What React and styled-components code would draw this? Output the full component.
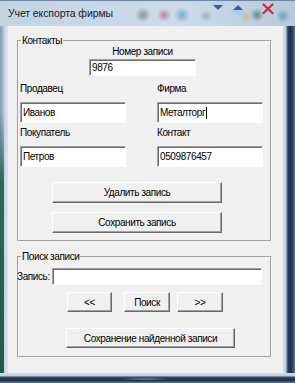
import React from "react";
import styled, { createGlobalStyle } from "styled-components";

const GlobalStyle = createGlobalStyle`
  html, body {
    margin: 0;
    padding: 0;
  }
  body {
    width: 295px;
    height: 383px;
    overflow: hidden;
    background: #2c4a66;
  }
`;

const Window = styled.div`
  width: 295px;
  height: 383px;
  display: flex;
  flex-direction: column;
  font-family: "Liberation Sans", Arial, sans-serif;
  font-size: 10px;
  letter-spacing: -0.4px;
  color: #000;
`;

const TitleBar = styled.div`
  height: 26px;
  flex: none;
  box-sizing: border-box;
  display: flex;
  align-items: flex-start;
  padding: 0 10px 0 8px;
  border-top: 1px solid #6a86a2;
  background:
    radial-gradient(circle at 143px 14px, rgba(70, 95, 90, 0.55) 0, rgba(70, 95, 90, 0) 8px),
    radial-gradient(circle at 164px 14px, rgba(175, 60, 110, 0.55) 0, rgba(175, 60, 110, 0) 7px),
    radial-gradient(circle at 182px 14px, rgba(40, 130, 190, 0.55) 0, rgba(40, 130, 190, 0) 8px),
    radial-gradient(circle at 206px 15px, rgba(90, 110, 130, 0.4) 0, rgba(90, 110, 130, 0) 6px),
    radial-gradient(circle at 246px 16px, rgba(200, 170, 90, 0.45) 0, rgba(200, 170, 90, 0) 7px),
    radial-gradient(circle at 257px 14px, rgba(40, 90, 70, 0.6) 0, rgba(40, 90, 70, 0) 7px),
    radial-gradient(circle at 283px 15px, rgba(40, 140, 150, 0.6) 0, rgba(40, 140, 150, 0) 7px),
    linear-gradient(to right, #c2d3e4 0, #cddbea 60%, #b7c9dc 100%);
`;

const Title = styled.span`
  font-size: 10.5px;
  letter-spacing: -0.1px;
  line-height: 12px;
  margin-top: 6px;
  color: #1a1a1a;
`;

const TitleButtons = styled.svg`
  margin-left: auto;
  flex: none;
`;

const Middle = styled.div`
  flex: 1;
  display: flex;
`;

const LeftEdge = styled.div`
  width: 8px;
  flex: none;
  background:
    linear-gradient(to bottom, rgba(30, 80, 60, 0) 0, rgba(30, 80, 60, 0) 25%, rgba(25, 95, 65, 0.85) 45%, rgba(20, 80, 55, 0.9) 100%) 0 0 / 4px 100% no-repeat,
    linear-gradient(to right, #7d97b0 0, #a6bbcf 3px, #c9d7e6 5px, #d8e3ee 8px);
`;

const RightEdge = styled.div`
  width: 12px;
  flex: none;
  background: linear-gradient(to right, #d3dde7 0, #c3cfdc 3px, #4f6b88 4px, #1c324c 6px, #20395a 9px, #61798f 12px);
`;

const BottomEdge = styled.div`
  height: 10px;
  flex: none;
  background:
    radial-gradient(ellipse at 145px 6px, rgba(150, 185, 220, 0.8) 0, rgba(150, 185, 220, 0) 25px),
    linear-gradient(to bottom, #d4dee8 0, #c0ccd9 3px, #30496a 4px, #1b2f4b 7px, #2a4260 8px, #6a7e94 10px);
`;

const Client = styled.div`
  width: 275px;
  flex: none;
  box-sizing: border-box;
  background: #f0f0f0;
  padding: 0 11px 0 9px;
  display: flex;
  flex-direction: column;
`;

const Group = styled.fieldset`
  margin: 9px 0 0 0;
  padding: 0 0 ${(p) => p.$bottom}px 1px;
  border: 2px groove #f4f4f4;
  display: flex;
  flex-direction: column;
  align-items: flex-start;
  min-width: 0;
`;

const Legend = styled.legend`
  line-height: 12px;
  padding: 0 1px;
  margin-left: 1px;
`;

const NumberBlock = styled.div`
  display: flex;
  flex-direction: column;
  align-items: center;
  margin: -2px 0 0 69px;
  width: 107px;
`;

const Label = styled.div`
  line-height: ${(p) => p.$lh || 14}px;
  white-space: nowrap;
`;

const TextBox = styled.div`
  box-sizing: border-box;
  width: ${(p) => p.$w}px;
  height: ${(p) => p.$h}px;
  margin-top: ${(p) => p.$mt || 0}px;
  background: #fff;
  border-top: 1px solid #a0a0a0;
  border-left: 1px solid #a0a0a0;
  border-right: 1px solid #fcfcfc;
  border-bottom: 1px solid #fcfcfc;
  box-shadow: inset 1px 1px 0 #6d6d6d;
  padding: 0 1px 0 2px;
  display: flex;
  align-items: center;
  line-height: 13px;
  white-space: nowrap;
`;

const Caret = styled.span`
  display: inline-block;
  width: 1px;
  height: 12px;
  background: #000;
  margin-left: 1px;
`;

const FieldGrid = styled.div`
  display: grid;
  grid-template-columns: 106px 106px;
  column-gap: 31px;
  row-gap: 3px;
  margin-top: 6px;
`;

const Field = styled.div`
  display: flex;
  flex-direction: column;
  gap: 6px;
`;

const Button = styled.div`
  box-sizing: border-box;
  width: ${(p) => p.$w}px;
  height: ${(p) => p.$h || 21}px;
  margin-left: ${(p) => p.$ml || 0}px;
  margin-top: ${(p) => p.$mt || 0}px;
  flex: none;
  background: #f0f0f0;
  border-top: 1px solid #ffffff;
  border-left: 1px solid #ffffff;
  border-right: 1px solid #696969;
  border-bottom: 1px solid #696969;
  box-shadow: inset -1px -1px 0 #a0a0a0;
  display: flex;
  align-items: center;
  justify-content: center;
  line-height: 13px;
  white-space: nowrap;
`;

const SearchRow = styled.div`
  display: flex;
  align-items: center;
  margin: 5px 0 0 -3px;
`;

const SearchLabel = styled.div`
  width: 35px;
  flex: none;
  line-height: 13px;
  white-space: nowrap;
`;

const ButtonRow = styled.div`
  display: flex;
  margin-top: 7px;
`;

const fields = [
  { label: "Продавец", value: "Иванов" },
  { label: "Фирма", value: "Металторг", caret: true },
  { label: "Покупатель", value: "Петров" },
  { label: "Контакт", value: "0509876457" },
];

const App = () => {
  return (
    <>
      <GlobalStyle />
      <Window>
        <TitleBar>
          <Title>Учет експорта фирмы</Title>
          <TitleButtons width="75" height="16" viewBox="0 0 75 16">
            <polygon points="3,4 13,4 8,9" fill="#2f5fa6" />
            <ellipse cx="28" cy="11" rx="7" ry="3" fill="#a9cbee" opacity="0.7" />
            <polygon points="23,9 33,9 28,4" fill="#2f5fa6" />
            <path d="M53.5 3.5 L62.5 12 M62.5 3.5 L53.5 12" stroke="#d8262c" strokeWidth="2.2" strokeLinecap="round" />
          </TitleButtons>
        </TitleBar>
        <Middle>
          <LeftEdge />
          <Client>
            <Group $bottom={7}>
              <Legend>Контакты</Legend>
              <NumberBlock>
                <Label $lh={13}>Номер записи</Label>
                <TextBox $w={107} $h={17} $mt={1}>9876</TextBox>
              </NumberBlock>
              <FieldGrid>
                {fields.map((f) => (
                  <Field key={f.label}>
                    <Label>{f.label}</Label>
                    <TextBox $w={106} $h={21}>
                      {f.value}
                      {f.caret && <Caret />}
                    </TextBox>
                  </Field>
                ))}
              </FieldGrid>
              <Button $w={170} $ml={32} $mt={15}>Удалить запись</Button>
              <Button $w={170} $ml={32} $mt={9}>Сохранить запись</Button>
            </Group>
            <Group $bottom={8}>
              <Legend>Поиск записи</Legend>
              <SearchRow>
                <SearchLabel>Запись:</SearchLabel>
                <TextBox $w={210} $h={17} />
              </SearchRow>
              <ButtonRow>
                <Button $w={45} $h={20} $ml={47}>&lt;&lt;</Button>
                <Button $w={46} $h={20} $ml={12}>Поиск</Button>
                <Button $w={46} $h={20} $ml={7}>&gt;&gt;</Button>
              </ButtonRow>
              <Button $w={169} $h={20} $ml={46} $mt={16}>Сохранение найденной записи</Button>
            </Group>
          </Client>
          <RightEdge />
        </Middle>
        <BottomEdge />
      </Window>
    </>
  );
};

export default App;
